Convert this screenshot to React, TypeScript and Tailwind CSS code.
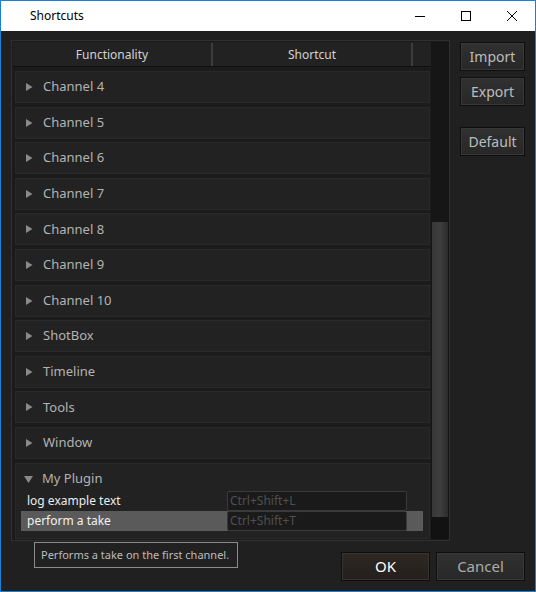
const groups = [
  "Channel 4",
  "Channel 5",
  "Channel 6",
  "Channel 7",
  "Channel 8",
  "Channel 9",
  "Channel 10",
  "ShotBox",
  "Timeline",
  "Tools",
  "Window"
]

const font = { fontFamily: '"Noto Sans", "Open Sans", sans-serif' }

const TriRight = () => (
  <svg width="7" height="8" viewBox="0 0 7 8" className="shrink-0">
    <path d="M0 0 L6.5 4 L0 8 Z" fill="#8a8a8a" />
  </svg>
)

const TriDown = () => (
  <svg width="9" height="7" viewBox="0 0 9 7" className="shrink-0">
    <path d="M0 0 L9 0 L4.5 7 Z" fill="#8a8a8a" />
  </svg>
)

const SideButton = ({ label, className }: { label: string; className?: string }) => (
  <button
    className={`w-[65px] h-[29px] border border-[#0e0e0e] bg-gradient-to-b from-[#313131] to-[#272727] shadow-[inset_0_0_0_1px_#383838] text-[14px] text-[#bdbdbd] ${className ?? ""}`}>
    {label}
  </button>
)

const App = () => {
  return (
    <div
      style={font}
      className="w-[536px] h-[592px] border border-[#1a80d6] flex flex-col overflow-hidden">
      {/* title bar */}
      <div className="h-[30px] bg-white flex items-center shrink-0">
        <span className="pl-[29px] text-[12px] text-black">Shortcuts</span>
        <div className="ml-auto flex h-full">
          <div className="w-[46px] h-full flex items-center justify-center">
            <div className="w-[10px] h-px bg-black" />
          </div>
          <div className="w-[46px] h-full flex items-center justify-center">
            <div className="w-[10px] h-[10px] border border-black" />
          </div>
          <div className="w-[46px] h-full flex items-center justify-center">
            <svg width="10" height="10" viewBox="0 0 10 10">
              <path d="M0 0 L10 10 M10 0 L0 10" stroke="#000" strokeWidth="1" />
            </svg>
          </div>
        </div>
      </div>

      {/* body */}
      <div className="flex-1 bg-[#202020] relative pt-[9px] px-[10px]">
        <div className="flex gap-[10px]">
          {/* tree frame */}
          <div className="w-[439px] h-[501px] border border-[#303030] bg-[#1b1b1b] pl-px pt-px pb-px flex">
            <div className="w-[418px] flex flex-col">
              <div className="h-[25px] flex bg-[#222222] border-b border-[#0f0f0f] text-[12px] text-[#d2d2d2] shrink-0 pt-px">
                <div className="w-[200px] border-r-[2px] border-[#3c3c3c] flex items-center justify-center">
                  Functionality
                </div>
                <div className="w-[200px] border-r-[2px] border-[#3c3c3c] flex items-center justify-center">
                  Shortcut
                </div>
                <div className="flex-1" />
              </div>
              <div className="flex-1 overflow-hidden pt-[4px] pl-[2px] pr-px flex flex-col gap-[3.6px]">
                {groups.map((g) => (
                  <div
                    key={g}
                    className="h-[32px] shrink-0 border border-[#292929] bg-[#222222] flex items-center pl-[10px] gap-[10px] text-[13px] text-[#b3b3b3]">
                    <TriRight />
                    <span>{g}</span>
                  </div>
                ))}
                <div className="h-[76px] shrink-0 border border-[#292929] bg-[#222222] pl-[5px] pr-[6px] flex flex-col">
                  <div className="h-[27px] flex items-center pl-[3px] pt-[4px] gap-[9px] text-[13px] text-[#b3b3b3]">
                    <TriDown />
                    <span>My Plugin</span>
                  </div>
                  <div className="h-[20px] flex items-center text-[12px] text-[#ececec]">
                    <span className="w-[206px] pl-[6px]">log example text</span>
                    <div className="w-[180px] h-[20px] border border-[#3a3a3a] rounded-[2px] bg-[#1a1a1a] text-[#505050] pl-[2px] flex items-center">
                      Ctrl+Shift+L
                    </div>
                  </div>
                  <div className="h-[20px] flex items-center bg-[#5a5a5a] text-[12px] text-[#f2f2f2]">
                    <span className="w-[206px] pl-[6px]">perform a take</span>
                    <div className="w-[180px] h-[20px] border border-[#3a3a3a] rounded-[2px] bg-[#1a1a1a] text-[#505050] pl-[2px] flex items-center">
                      Ctrl+Shift+T
                    </div>
                  </div>
                </div>
              </div>
            </div>
            {/* scrollbar */}
            <div className="w-[18px] bg-[#161616] flex flex-col">
              <div className="h-[180px] shrink-0" />
              <div className="h-[295px] shrink-0 ml-px mr-px bg-gradient-to-r from-[#383838] via-[#3e3e3e] to-[#2b2b2b]" />
              <div className="flex-1 bg-[#121212]" />
            </div>
          </div>

          {/* side buttons */}
          <div className="flex flex-col pt-[2px]">
            <SideButton label="Import" />
            <SideButton label="Export" className="mt-[6px]" />
            <SideButton label="Default" className="mt-[21px]" />
          </div>
        </div>

        <div className="flex justify-end gap-[6px] mt-[11px]">
          <button className="w-[89px] h-[29px] border border-[#0e0e0e] bg-gradient-to-b from-[#2e2824] to-[#241f1c] shadow-[inset_0_0_0_1px_#3a3430] text-[15px] text-white">
            OK
          </button>
          <button className="w-[89px] h-[29px] border border-[#0e0e0e] bg-gradient-to-b from-[#313131] to-[#282828] shadow-[inset_0_0_0_1px_#383838] text-[15px] text-[#ababab]">
            Cancel
          </button>
        </div>

        {/* tooltip */}
        <div className="absolute left-[33px] top-[511px] w-[204px] h-[26px] border border-[#8c8c8c] bg-[#212121] flex items-center pl-[6px] text-[11px] text-[#bdbdbd] whitespace-nowrap overflow-hidden">
          Performs a take on the first channel.
        </div>
      </div>
    </div>
  )
}

export default App
